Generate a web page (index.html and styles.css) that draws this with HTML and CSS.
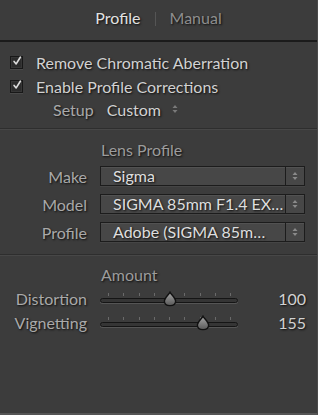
FILE: index.html
```html
<!DOCTYPE html>
<html>
<head>
<meta charset="utf-8">
<link rel="stylesheet" href="styles.css">
</head>
<body>
<div class="panel">
  <div class="tabs">
    <span class="tab active">Profile</span>
    <span class="tab-sep"></span>
    <span class="tab">Manual</span>
  </div>

  <div class="section checks">
    <label class="check-row"><span class="box"><svg viewBox="0 0 12 12" width="12" height="12"><path d="M2.5 6.5 L5 9.5 L10 1.5" fill="none" stroke="#dcdcdc" stroke-width="2" stroke-linecap="round" stroke-linejoin="round"/></svg></span><span class="check-text">Remove Chromatic Aberration</span></label>
    <label class="check-row"><span class="box"><svg viewBox="0 0 12 12" width="12" height="12"><path d="M2.5 6.5 L5 9.5 L10 1.5" fill="none" stroke="#dcdcdc" stroke-width="2" stroke-linecap="round" stroke-linejoin="round"/></svg></span><span class="check-text">Enable Profile Corrections</span></label>
    <div class="setup-row">
      <span class="lbl">Setup</span>
      <span class="setup-val">Custom</span>
      <svg class="updown small" viewBox="0 0 6 10" width="6" height="10"><path d="M0.5 4 L3 1 L5.5 4 Z M0.5 6 L3 9 L5.5 6 Z" fill="#7a7a7a"/></svg>
    </div>
  </div>

  <div class="section lens">
    <div class="heading">Lens Profile</div>
    <div class="form-grid">
      <span class="lbl">Make</span>
      <div class="select"><span class="sel-text">Sigma</span><span class="sel-arrow"><svg viewBox="0 0 6 10" width="6" height="10"><path d="M0.5 4 L3 1 L5.5 4 Z M0.5 6 L3 9 L5.5 6 Z" fill="#8a8a8a"/></svg></span></div>
      <span class="lbl">Model</span>
      <div class="select"><span class="sel-text">SIGMA 85mm F1.4 EX…</span><span class="sel-arrow"><svg viewBox="0 0 6 10" width="6" height="10"><path d="M0.5 4 L3 1 L5.5 4 Z M0.5 6 L3 9 L5.5 6 Z" fill="#8a8a8a"/></svg></span></div>
      <span class="lbl">Profile</span>
      <div class="select"><span class="sel-text">Adobe (SIGMA 85m…</span><span class="sel-arrow"><svg viewBox="0 0 6 10" width="6" height="10"><path d="M0.5 4 L3 1 L5.5 4 Z M0.5 6 L3 9 L5.5 6 Z" fill="#8a8a8a"/></svg></span></div>
    </div>
  </div>

  <div class="section amount">
    <div class="heading">Amount</div>
    <div class="slider-grid">
      <span class="lbl">Distortion</span>
      <div class="slider">
        <div class="ticks"><i></i><i></i><i></i><i></i><i></i><i></i><i></i><i></i><i></i></div>
        <div class="track"></div>
        <svg class="thumb" style="left: 50.5%" viewBox="0 0 16 16" width="16" height="16"><defs><linearGradient id="tg1" x1="0" y1="0" x2="0" y2="1"><stop offset="0" stop-color="#a8a8a8"/><stop offset="1" stop-color="#585858"/></linearGradient></defs><path d="M8 1.2 C9 3.4 13.6 7 13.6 10.2 C13.6 13 11.2 14.6 8 14.6 C4.8 14.6 2.4 13 2.4 10.2 C2.4 7 7 3.4 8 1.2 Z" fill="url(#tg1)" stroke="#111" stroke-width="1.4"/></svg>
      </div>
      <span class="val">100</span>
      <span class="lbl">Vignetting</span>
      <div class="slider">
        <div class="ticks"><i></i><i></i><i></i><i></i><i></i><i></i><i></i><i></i><i></i></div>
        <div class="track"></div>
        <svg class="thumb" style="left: 74.5%" viewBox="0 0 16 16" width="16" height="16"><defs><linearGradient id="tg2" x1="0" y1="0" x2="0" y2="1"><stop offset="0" stop-color="#a8a8a8"/><stop offset="1" stop-color="#585858"/></linearGradient></defs><path d="M8 1.2 C9 3.4 13.6 7 13.6 10.2 C13.6 13 11.2 14.6 8 14.6 C4.8 14.6 2.4 13 2.4 10.2 C2.4 7 7 3.4 8 1.2 Z" fill="url(#tg2)" stroke="#111" stroke-width="1.4"/></svg>
      </div>
      <span class="val">155</span>
    </div>
  </div>
</div>
</body>
</html>
```

FILE: styles.css
```css
* { box-sizing: border-box; }
html, body {
  margin: 0;
  padding: 0;
  background: #3c3c3c;
}
body {
  font-family: "Lato", "Open Sans", sans-serif;
  font-size: 16px;
  color: #cfcfcf;
  text-shadow: 1px 1px 2px #0d0d0d;
}
.panel {
  width: 318px;
  height: 415px;
  background: #3c3c3c;
  border-right: 1px solid #4a4a4a;
  border-bottom: 2px solid #555;
  display: flex;
  flex-direction: column;
}
.tabs {
  height: 42px;
  border-bottom: 2px solid #1b1b1b;
  display: flex;
  align-items: center;
  justify-content: center;
  gap: 14px;
  padding-left: 0;
  padding-bottom: 6px;
}
.tab { color: #8e8e8e; font-size: 16px; }
.tab.active { color: #e2e2e2; }
.tab-sep {
  width: 1px;
  height: 14px;
  background: #555;
  margin-top: 4px;
}
.section {
  border-bottom: 1px solid #2e2e2e;
  box-shadow: 0 1px 0 #474747;
}
.checks {
  padding: 8px 0 6px 10px;
  height: 87px;
}
.check-row {
  display: flex;
  align-items: center;
  height: 24px;
  gap: 13px;
}
.box {
  width: 13px;
  height: 13px;
  background: #2c2c2c;
  border: 1px solid #181818;
  box-shadow: inset 0 0 0 1px #363636, 0 1px 0 #4a4a4a;
  display: flex;
  align-items: center;
  justify-content: center;
  text-shadow: none;
}
.box svg { margin-left: 1px; margin-top: -2px; }
.check-text { color: #d2d2d2; }
.setup-row {
  display: flex;
  align-items: center;
  height: 24px;
  padding-left: 43px;
  margin-top: -1px;
}
.lbl { color: #a9a9a9; }
.setup-val { margin-left: 13px; color: #d2d2d2; }
.updown.small { margin-left: 11px; }
.heading {
  color: #9c9c9c;
  padding-left: 101px;
  height: 24px;
  line-height: 24px;
}
.lens {
  padding-top: 9px;
  height: 126px;
}
.form-grid {
  display: grid;
  grid-template-columns: 87px 205px;
  column-gap: 13px;
  row-gap: 8px;
  align-items: center;
  margin-top: 4px;
}
.form-grid .lbl { text-align: right; }
.select {
  height: 20px;
  display: flex;
  border: 1px solid #1c1c1c;
  background: #474747;
  box-shadow: inset 0 1px 0 #525252, 0 1px 0 #454545;
}
.sel-text {
  flex: 1;
  padding-left: 12px;
  line-height: 18px;
  color: #dedede;
  white-space: nowrap;
  overflow: hidden;
}
.sel-arrow {
  width: 19px;
  border-left: 1px solid #1c1c1c;
  display: flex;
  align-items: center;
  justify-content: center;
}
.amount {
  padding-top: 8px;
  border-bottom: none;
  box-shadow: none;
  flex: 1;
}
.slider-grid {
  display: grid;
  grid-template-columns: 87px 138px 1fr;
  column-gap: 13px;
  row-gap: 0;
  align-items: center;
  margin-top: -1px;
}
.slider-grid .lbl { text-align: right; }
.val { text-align: right; padding-right: 11px; color: #d2d2d2; }
.slider {
  position: relative;
  height: 24px;
}
.ticks {
  position: absolute;
  left: 8px;
  right: 7px;
  top: 7px;
  display: flex;
  justify-content: space-between;
}
.ticks i {
  display: block;
  width: 1px;
  height: 3px;
  background: #6a6a6a;
}
.track {
  position: absolute;
  left: 0;
  right: 0;
  top: 12px;
  height: 5px;
  border-radius: 3px;
  background: #353535;
  border: 1px solid #151515;
  box-shadow: 0 1px 0 #555;
}
.thumb {
  position: absolute;
  top: 5px;
  margin-left: -8px;
}
```
